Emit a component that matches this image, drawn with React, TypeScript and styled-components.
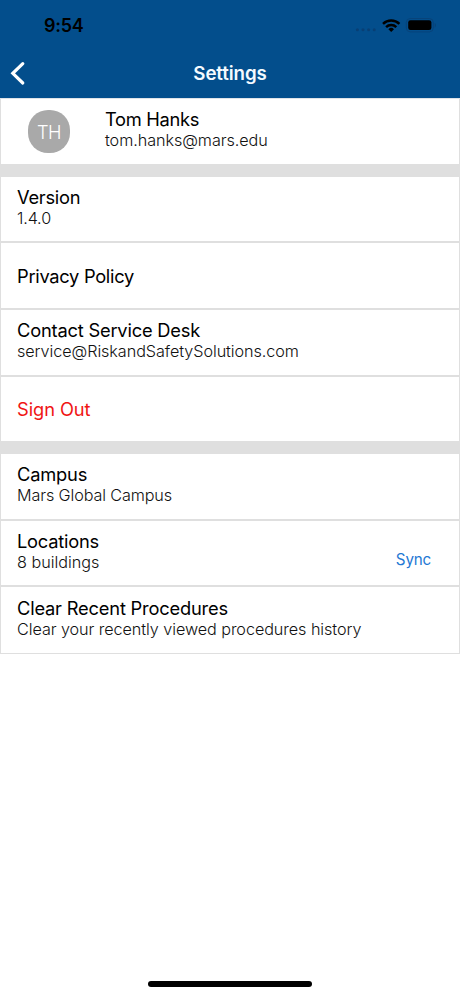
import React from "react";
import styled, { createGlobalStyle } from "styled-components";

const GlobalStyle = createGlobalStyle`
  * { box-sizing: border-box; }
  html, body { margin: 0; background: #fff; }
  body { font-family: Inter, "Liberation Sans", sans-serif; color: #000; }
`;

const Screen = styled.main`
  width: 460px;
  height: 996px;
  display: flex;
  flex-direction: column;
  overflow: hidden;
  background: #fff;
`;

const Header = styled.header`
  flex: none;
  height: 98px;
  background: #034e8c;
`;

const StatusBar = styled.div`
  height: 49px;
  padding: 3px 24px 0 44px;
  display: flex;
  align-items: center;
  justify-content: space-between;
`;

const Time = styled.span`
  padding-bottom: 1px;
  font-size: 18px;
  font-weight: 600;
  letter-spacing: -0.3px;
`;

const StatusIcons = styled.svg`
  display: block;
  width: 82px;
  height: 20px;
`;

const NavBar = styled.div`
  height: 49px;
  display: grid;
  grid-template-columns: 60px 1fr 60px;
  align-items: center;
`;

const BackButton = styled.button`
  width: 36px;
  height: 49px;
  padding: 0;
  border: 0;
  background: none;
`;

const BackIcon = styled.svg`
  display: block;
  width: 36px;
  height: 49px;
`;

const NavTitle = styled.h1`
  margin: 0;
  text-align: center;
  font-size: 18.7px;
  line-height: 24px;
  font-weight: 600;
  letter-spacing: -0.1px;
  color: #f4faff;
`;

const Section = styled.section<{ $gap?: boolean }>`
  flex: none;
  border-top: ${(p) => (p.$gap ? "13px solid #dfdfdf" : "1px solid #dfe3e8")};
`;

const Row = styled.div<{ $height: number; $line?: number }>`
  height: ${(p) => p.$height}px;
  padding: 0 28px 0 16px;
  display: flex;
  align-items: center;
  border: 1px solid #dfdfdf;
  border-width: 0 1px ${(p) => p.$line ?? 2}px 1px;
`;

const AvatarCell = styled.div`
  width: 88px;
  padding-left: 11px;
`;

const Avatar = styled.div`
  width: 42px;
  height: 43px;
  border-radius: 20px;
  background: #a9a9a9;
  color: #fff;
  display: flex;
  align-items: center;
  justify-content: center;
  font-size: 18.2px;
  font-weight: 300;
  letter-spacing: -0.4px;
`;

const Texts = styled.div<{ $single?: boolean }>`
  flex: 1;
  display: flex;
  flex-direction: column;
  padding: ${(p) => (p.$single ? "1px 0 0" : "0 0 5px")};
  white-space: nowrap;
`;

const Title = styled.span<{ $track?: number; $danger?: boolean }>`
  font-size: 18.3px;
  line-height: 23px;
  letter-spacing: ${(p) => p.$track ?? 0}px;
  color: ${(p) => (p.$danger ? "#f01414" : "#000")};
`;

const Subtitle = styled.span<{ $track?: number }>`
  font-size: 16.2px;
  line-height: 19px;
  font-weight: 300;
  letter-spacing: ${(p) => p.$track ?? 0}px;
  color: #111;
`;

const SyncButton = styled.button`
  margin-top: 14px;
  padding: 0;
  border: 0;
  background: none;
  font: 400 15.2px/20px Inter, sans-serif;
  letter-spacing: -0.2px;
  color: #2478d4;
`;

const HomeArea = styled.footer`
  margin-top: auto;
  height: 15px;
  display: flex;
  justify-content: center;
`;

const HomeIndicator = styled.div`
  width: 164px;
  height: 6px;
  border-radius: 3px;
  background: #000;
`;

interface Item {
  title: string;
  titleTrack: number;
  subtitle?: string;
  subtitleTrack?: number;
  height: number;
  line?: number;
  danger?: boolean;
  action?: string;
}

const appItems: Item[] = [
  { title: "Version", titleTrack: -0.27, subtitle: "1.4.0", subtitleTrack: -0.15, height: 66 },
  { title: "Privacy Policy", titleTrack: -0.29, height: 67 },
  {
    title: "Contact Service Desk",
    titleTrack: -0.2,
    subtitle: "service@RiskandSafetySolutions.com",
    subtitleTrack: -0.07,
    height: 67,
  },
  { title: "Sign Out", titleTrack: -0.07, height: 64, line: 0, danger: true },
];

const campusItems: Item[] = [
  { title: "Campus", titleTrack: -0.18, subtitle: "Mars Global Campus", subtitleTrack: -0.12, height: 67 },
  { title: "Locations", titleTrack: -0.22, subtitle: "8 buildings", height: 66, action: "Sync" },
  {
    title: "Clear Recent Procedures",
    titleTrack: -0.19,
    subtitle: "Clear your recently viewed procedures history",
    subtitleTrack: -0.07,
    height: 67,
    line: 1,
  },
];

function SettingsRow({ item }: { item: Item }) {
  return (
    <Row $height={item.height} $line={item.line}>
      <Texts $single={!item.subtitle}>
        <Title $track={item.titleTrack} $danger={item.danger}>{item.title}</Title>
        {item.subtitle && <Subtitle $track={item.subtitleTrack}>{item.subtitle}</Subtitle>}
      </Texts>
      {item.action && <SyncButton>{item.action}</SyncButton>}
    </Row>
  );
}

export default function App() {
  return (
    <>
      <GlobalStyle />
      <Screen>
        <Header>
          <StatusBar>
            <Time>9:54</Time>
            <StatusIcons viewBox="354 16 82 20" aria-hidden="true">
              <g fill="#083f74">
                <circle cx="357.4" cy="29.8" r="1.5" />
                <circle cx="363" cy="29.8" r="1.5" />
                <circle cx="368.6" cy="29.8" r="1.5" />
                <circle cx="374.2" cy="29.8" r="1.5" />
              </g>
              <g fill="none" stroke="#000" strokeWidth="2.5">
                <path d="M383 23.9 A11.8 11.8 0 0 1 399.4 23.9" />
                <path d="M386.1 27.2 A7.3 7.3 0 0 1 396.3 27.2" />
              </g>
              <path d="M391.2 32 L388.4 29.2 A4 4 0 0 1 394 29.2 Z" />
              <rect x="406.3" y="18.5" width="27" height="13.4" rx="4" fill="none" stroke="#07437a" />
              <rect x="408.2" y="20.3" width="23.2" height="9.8" rx="2.3" />
              <path d="M434.7 23 Q436 23.6 436 25.2 T434.7 27.4 Z" fill="#07437a" />
            </StatusIcons>
          </StatusBar>
          <NavBar>
            <BackButton aria-label="Back">
              <BackIcon viewBox="0 49 36 49">
                <path
                  d="M22.8 63.6 L12.8 73.3 L22.8 83"
                  fill="none"
                  stroke="#fff"
                  strokeWidth="3.2"
                  strokeLinecap="round"
                />
              </BackIcon>
            </BackButton>
            <NavTitle>Settings</NavTitle>
          </NavBar>
        </Header>
        <Section>
          <Row $height={65} $line={0}>
            <AvatarCell>
              <Avatar>TH</Avatar>
            </AvatarCell>
            <Texts>
              <Title $track={-0.3}>Tom Hanks</Title>
              <Subtitle $track={-0.07}>tom.hanks@mars.edu</Subtitle>
            </Texts>
          </Row>
        </Section>
        <Section $gap>
          {appItems.map((item) => <SettingsRow key={item.title} item={item} />)}
        </Section>
        <Section $gap>
          {campusItems.map((item) => <SettingsRow key={item.title} item={item} />)}
        </Section>
        <HomeArea>
          <HomeIndicator />
        </HomeArea>
      </Screen>
    </>
  );
}
